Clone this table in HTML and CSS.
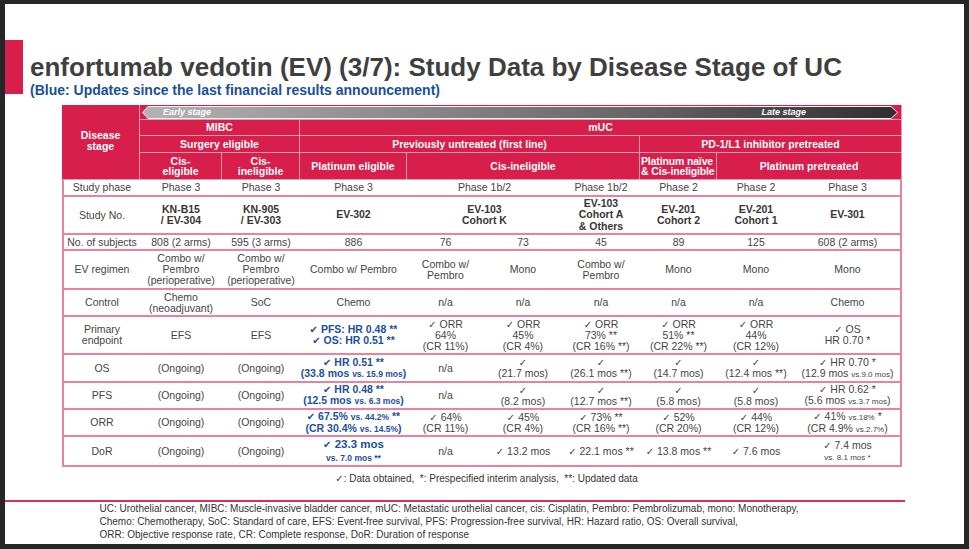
FILE: index.html
```html
<!DOCTYPE html>
<html lang="en">
<head>
<meta charset="utf-8">
<title>enfortumab vedotin (EV) (3/7)</title>
<link rel="stylesheet" href="styles.css">
</head>
<body>
<div class="slide">
  <div class="head">
    <div class="bar"></div>
    <div class="titles">
      <h1>enfortumab vedotin (EV) (3/7): Study Data by Disease Stage of UC</h1>
      <p class="sub">(Blue: Updates since the last financial results announcement)</p>
    </div>
  </div>

  <div class="tbl">
    <!-- header -->
    <div class="h dstage r4"><p>Disease<br>stage</p></div>
    <div class="h arrowcell s9">
      <div class="arrow"><div class="arrow-in"><span class="early">Early stage</span><span class="late">Late stage</span></div></div>
    </div>
    <div class="h s2"><p>MIBC</p></div>
    <div class="h s7"><p>mUC</p></div>
    <div class="h s2"><p>Surgery eligible</p></div>
    <div class="h s4"><p>Previously untreated (first line)</p></div>
    <div class="h s3"><p>PD-1/L1 inhibitor pretreated</p></div>
    <div class="h"><p>Cis-<br>eligible</p></div>
    <div class="h"><p>Cis-<br>ineligible</p></div>
    <div class="h"><p>Platinum eligible</p></div>
    <div class="h s3"><p>Cis-ineligible</p></div>
    <div class="h tight"><p>Platinum naïve<br>&amp; Cis-ineligible</p></div>
    <div class="h s2"><p>Platinum pretreated</p></div>

    <!-- Study phase -->
    <div class="c lab"><p>Study phase</p></div>
    <div class="c"><p>Phase 3</p></div>
    <div class="c"><p>Phase 3</p></div>
    <div class="c"><p>Phase 3</p></div>
    <div class="c s2"><p>Phase 1b/2</p></div>
    <div class="c"><p>Phase 1b/2</p></div>
    <div class="c"><p>Phase 2</p></div>
    <div class="c"><p>Phase 2</p></div>
    <div class="c last"><p>Phase 3</p></div>

    <!-- Study No. -->
    <div class="c lab"><p>Study No.</p></div>
    <div class="c b"><p>KN-B15<br>/ EV-304</p></div>
    <div class="c b"><p>KN-905<br>/ EV-303</p></div>
    <div class="c b"><p>EV-302</p></div>
    <div class="c b s2"><p>EV-103<br>Cohort K</p></div>
    <div class="c b"><p>EV-103<br>Cohort A<br>&amp; Others</p></div>
    <div class="c b"><p>EV-201<br>Cohort 2</p></div>
    <div class="c b"><p>EV-201<br>Cohort 1</p></div>
    <div class="c b last"><p>EV-301</p></div>

    <!-- No. of subjects -->
    <div class="c lab"><p>No. of subjects</p></div>
    <div class="c"><p>808 (2 arms)</p></div>
    <div class="c"><p>595 (3 arms)</p></div>
    <div class="c"><p>886</p></div>
    <div class="c"><p>76</p></div>
    <div class="c"><p>73</p></div>
    <div class="c"><p>45</p></div>
    <div class="c"><p>89</p></div>
    <div class="c"><p>125</p></div>
    <div class="c last"><p>608 (2 arms)</p></div>

    <!-- EV regimen -->
    <div class="c lab"><p>EV regimen</p></div>
    <div class="c"><p>Combo w/<br>Pembro<br>(perioperative)</p></div>
    <div class="c"><p>Combo w/<br>Pembro<br>(perioperative)</p></div>
    <div class="c"><p>Combo w/ Pembro</p></div>
    <div class="c"><p>Combo w/<br>Pembro</p></div>
    <div class="c"><p>Mono</p></div>
    <div class="c"><p>Combo w/<br>Pembro</p></div>
    <div class="c"><p>Mono</p></div>
    <div class="c"><p>Mono</p></div>
    <div class="c last"><p>Mono</p></div>

    <!-- Control -->
    <div class="c lab"><p>Control</p></div>
    <div class="c"><p>Chemo<br>(neoadjuvant)</p></div>
    <div class="c"><p>SoC</p></div>
    <div class="c"><p>Chemo</p></div>
    <div class="c"><p>n/a</p></div>
    <div class="c"><p>n/a</p></div>
    <div class="c"><p>n/a</p></div>
    <div class="c"><p>n/a</p></div>
    <div class="c"><p>n/a</p></div>
    <div class="c last"><p>Chemo</p></div>

    <!-- Primary endpoint -->
    <div class="c lab"><p>Primary<br>endpoint</p></div>
    <div class="c"><p>EFS</p></div>
    <div class="c"><p>EFS</p></div>
    <div class="c blue"><p><span class="bk">✔</span> PFS: HR 0.48 **<br><span class="bk">✔</span> OS: HR 0.51 **</p></div>
    <div class="c"><p><span class="ck">✓</span> ORR<br>64%<br>(CR 11%)</p></div>
    <div class="c"><p><span class="ck">✓</span> ORR<br>45%<br>(CR 4%)</p></div>
    <div class="c"><p><span class="ck">✓</span> ORR<br>73% **<br>(CR 16% **)</p></div>
    <div class="c"><p><span class="ck">✓</span> ORR<br>51% **<br>(CR 22% **)</p></div>
    <div class="c"><p><span class="ck">✓</span> ORR<br>44%<br>(CR 12%)</p></div>
    <div class="c last"><p><span class="ck">✓</span> OS<br>HR 0.70 *</p></div>

    <!-- OS -->
    <div class="c lab"><p>OS</p></div>
    <div class="c"><p>(Ongoing)</p></div>
    <div class="c"><p>(Ongoing)</p></div>
    <div class="c blue"><p><span class="bk">✔</span> HR 0.51 **<br>(33.8 mos <span class="bsm">vs. 15.9 mos</span>)</p></div>
    <div class="c"><p>n/a</p></div>
    <div class="c"><p><span class="ck">✓</span><br>(21.7 mos)</p></div>
    <div class="c"><p><span class="ck">✓</span><br>(26.1 mos **)</p></div>
    <div class="c"><p><span class="ck">✓</span><br>(14.7 mos)</p></div>
    <div class="c"><p><span class="ck">✓</span><br>(12.4 mos **)</p></div>
    <div class="c last"><p><span class="ck">✓</span> HR 0.70 *<br>(12.9 mos <span class="sm">vs.9.0 mos</span>)</p></div>

    <!-- PFS -->
    <div class="c lab"><p>PFS</p></div>
    <div class="c"><p>(Ongoing)</p></div>
    <div class="c"><p>(Ongoing)</p></div>
    <div class="c blue"><p><span class="bk">✔</span> HR 0.48 **<br>(12.5 mos <span class="bsm">vs. 6.3 mos</span>)</p></div>
    <div class="c"><p>n/a</p></div>
    <div class="c"><p><span class="ck">✓</span><br>(8.2 mos)</p></div>
    <div class="c"><p><span class="ck">✓</span><br>(12.7 mos **)</p></div>
    <div class="c"><p><span class="ck">✓</span><br>(5.8 mos)</p></div>
    <div class="c"><p><span class="ck">✓</span><br>(5.8 mos)</p></div>
    <div class="c last"><p><span class="ck">✓</span> HR 0.62 *<br>(5.6 mos <span class="sm">vs.3.7 mos</span>)</p></div>

    <!-- ORR -->
    <div class="c lab"><p>ORR</p></div>
    <div class="c"><p>(Ongoing)</p></div>
    <div class="c"><p>(Ongoing)</p></div>
    <div class="c blue"><p><span class="bk">✔</span> 67.5% <span class="bsm">vs. 44.2%</span> **<br>(CR 30.4% <span class="bsm">vs. 14.5%</span>)</p></div>
    <div class="c"><p><span class="ck">✓</span> 64%<br>(CR 11%)</p></div>
    <div class="c"><p><span class="ck">✓</span> 45%<br>(CR 4%)</p></div>
    <div class="c"><p><span class="ck">✓</span> 73% **<br>(CR 16% **)</p></div>
    <div class="c"><p><span class="ck">✓</span> 52%<br>(CR 20%)</p></div>
    <div class="c"><p><span class="ck">✓</span> 44%<br>(CR 12%)</p></div>
    <div class="c last"><p><span class="ck">✓</span> 41% <span class="sm">vs.18%</span> *<br>(CR 4.9% <span class="sm">vs.2.7%</span>)</p></div>

    <!-- DoR -->
    <div class="c lab"><p>DoR</p></div>
    <div class="c"><p>(Ongoing)</p></div>
    <div class="c"><p>(Ongoing)</p></div>
    <div class="c blue"><p class="dor"><span class="bk">✔</span> 23.3 mos<br><span class="bsm">vs. 7.0 mos **</span></p></div>
    <div class="c"><p>n/a</p></div>
    <div class="c"><p><span class="ck">✓</span> 13.2 mos</p></div>
    <div class="c"><p><span class="ck">✓</span> 22.1 mos **</p></div>
    <div class="c"><p><span class="ck">✓</span> 13.8 mos **</p></div>
    <div class="c"><p><span class="ck">✓</span> 7.6 mos</p></div>
    <div class="c last"><p><span class="ck">✓</span> 7.4 mos<br><span class="sm">vs. 8.1 mos *</span></p></div>
  </div>

  <p class="legend"><span class="ck">✓</span>: Data obtained,&nbsp; *: Prespecified interim analysis,&nbsp; **: Updated data</p>
  <div class="rule"></div>
  <p class="notes">UC: Urothelial cancer, MIBC: Muscle-invasive bladder cancer, mUC: Metastatic urothelial cancer, cis: Cisplatin, Pembro: Pembrolizumab, mono: Monotherapy,<br>Chemo: Chemotherapy, SoC: Standard of care, EFS: Event-free survival, PFS: Progression-free survival, HR: Hazard ratio, OS: Overall survival,<br>ORR: Objective response rate, CR: Complete response, DoR: Duration of response</p>
</div>
</body>
</html>
```

FILE: styles.css
```css
:root {
  --red: #d81e4b;
  --pink: #e9829b;
  --grey: #454545;
  --blue: #1d4f9c;
}

html, body {
  margin: 0;
  padding: 0;
}

body {
  background: #262626;
  font-family: "Liberation Sans", Arial, "DejaVu Sans", sans-serif;
  width: 969px;
  height: 549px;
  overflow: hidden;
}

.slide {
  width: 959px;
  height: 540px;
  margin: 4px 0 0 5px;
  background: #fff;
  padding-top: 36px;
  box-sizing: border-box;
  overflow: hidden;
}

/* title area */
.head {
  display: flex;
  align-items: flex-start;
}

.bar {
  flex: none;
  width: 18px;
  height: 54px;
  background: var(--red);
}

.titles {
  margin-left: 7px;
  padding-top: 15px;
}

h1 {
  margin: 0;
  font-size: 26px;
  line-height: 25px;
  font-weight: bold;
  color: #3f3f3f;
  white-space: nowrap;
}

.sub {
  margin: 3px 0 0;
  font-size: 14px;
  line-height: 14px;
  font-weight: bold;
  color: #1a4f9b;
  white-space: nowrap;
}

/* table */
.tbl {
  display: grid;
  width: 840px;
  margin: 8px 0 0 57px;
  grid-template-columns: 78px 82px 78px 107px 77px 78px 78px 77px 78px 107px;
  grid-template-rows: 15px 16px 17px 27px 17px 38px 16px 39px 27px 38px 28px 27px 27px 30px;
  font-size: 10.5px;
  color: var(--grey);
}

.tbl p {
  margin: 0;
}

.s2 { grid-column: span 2; }
.s3 { grid-column: span 3; }
.s4 { grid-column: span 4; }
.s7 { grid-column: span 7; }
.s9 { grid-column: span 9; }
.r4 { grid-row: span 4; }

.h {
  background: var(--red);
  color: #fff;
  font-weight: bold;
  display: flex;
  align-items: center;
  justify-content: center;
  text-align: center;
  line-height: 10.5px;
  white-space: nowrap;
  box-sizing: border-box;
  border-right: 1px solid rgba(255, 255, 255, 0.55);
  border-bottom: 1px solid rgba(255, 255, 255, 0.55);
}

.h.dstage {
  line-height: 11.5px;
  padding-bottom: 2px;
}

.h.tight {
  letter-spacing: -0.15px;
  justify-content: flex-start;
  padding-left: 1px;
  text-align: left;
}

.arrowcell {
  display: block;
  padding: 1px 3px 0 2px;
}

.arrow {
  height: 13px;
  background: #f4f4f4;
  clip-path: polygon(6px 0, calc(100% - 7px) 0, 100% 50%, calc(100% - 7px) 100%, 6px 100%, 0 50%);
  padding: 1px;
  box-sizing: border-box;
}

.arrow-in {
  height: 100%;
  background: linear-gradient(90deg, #b3b3b3 0%, #8a8a8a 35%, #6a6a6a 62%, #2f2f2f 100%);
  clip-path: polygon(5px 0, calc(100% - 6px) 0, 100% 50%, calc(100% - 6px) 100%, 5px 100%, 0 50%);
  display: flex;
  justify-content: space-between;
  align-items: center;
  font-size: 9px;
  font-style: italic;
  font-weight: bold;
  color: #fff;
  line-height: 11px;
}

.early {
  padding-left: 20px;
}

.late {
  padding-right: 91px;
}

.c {
  display: flex;
  align-items: center;
  justify-content: center;
  text-align: center;
  line-height: 11px;
  white-space: nowrap;
  box-sizing: border-box;
  border-bottom: 2px solid var(--pink);
}

.lab {
  border-left: 2px solid var(--pink);
}

.last {
  border-right: 2px solid var(--pink);
}

.b {
  font-weight: bold;
  color: #363636;
  line-height: 11.5px;
}

.blue {
  color: var(--blue);
  font-weight: bold;
  line-height: 11px;
}

.dor {
  font-size: 11.5px;
  line-height: 12px;
}

.dor .bsm {
  font-size: 8.5px;
}

.sm {
  font-size: 8px;
}

.bsm {
  font-size: 8.5px;
}

.ck {
  font-family: "DejaVu Sans", sans-serif;
  font-size: 10px;
}

.bk {
  font-family: "DejaVu Sans", sans-serif;
  font-size: 10px;
}

/* footer */
.legend {
  margin: 5px 0 0;
  padding-left: 4px;
  text-align: center;
  font-size: 10px;
  line-height: 14px;
  color: #333;
}

.rule {
  width: 900px;
  height: 2px;
  margin-top: 13.5px;
  background: #dc2f57;
}

.notes {
  margin: 0;
  padding-left: 94.5px;
  font-size: 10px;
  line-height: 13px;
  color: #333;
  white-space: nowrap;
}
```
